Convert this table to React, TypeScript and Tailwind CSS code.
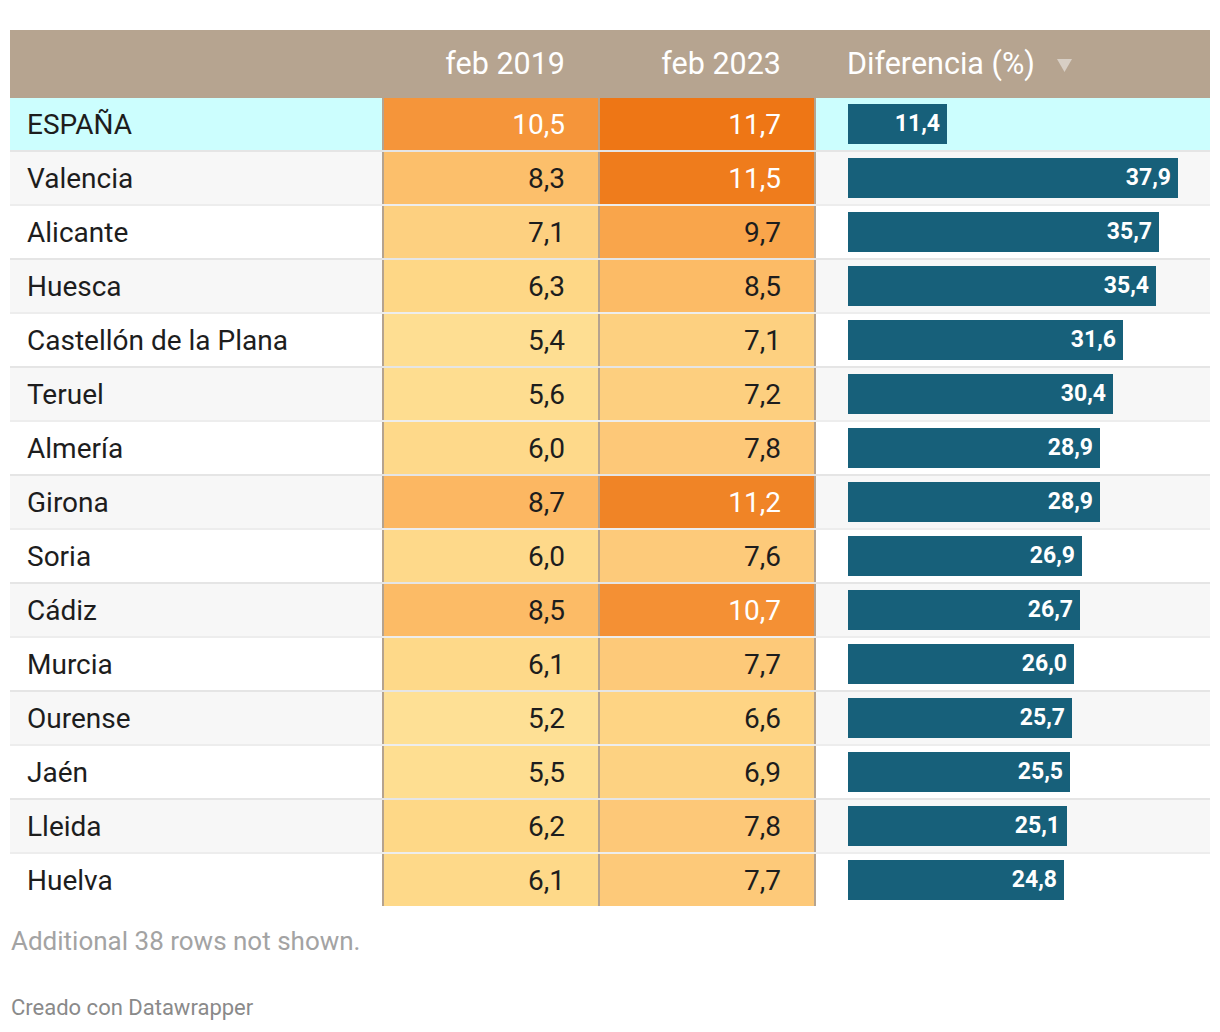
import React from 'react';

type Row = { name: string; a: number; b: number; diff: number };

const rows: Row[] = [
  { name: 'ESPAÑA', a: 10.5, b: 11.7, diff: 11.4 },
  { name: 'Valencia', a: 8.3, b: 11.5, diff: 37.9 },
  { name: 'Alicante', a: 7.1, b: 9.7, diff: 35.7 },
  { name: 'Huesca', a: 6.3, b: 8.5, diff: 35.4 },
  { name: 'Castellón de la Plana', a: 5.4, b: 7.1, diff: 31.6 },
  { name: 'Teruel', a: 5.6, b: 7.2, diff: 30.4 },
  { name: 'Almería', a: 6.0, b: 7.8, diff: 28.9 },
  { name: 'Girona', a: 8.7, b: 11.2, diff: 28.9 },
  { name: 'Soria', a: 6.0, b: 7.6, diff: 26.9 },
  { name: 'Cádiz', a: 8.5, b: 10.7, diff: 26.7 },
  { name: 'Murcia', a: 6.1, b: 7.7, diff: 26.0 },
  { name: 'Ourense', a: 5.2, b: 6.6, diff: 25.7 },
  { name: 'Jaén', a: 5.5, b: 6.9, diff: 25.5 },
  { name: 'Lleida', a: 6.2, b: 7.8, diff: 25.1 },
  { name: 'Huelva', a: 6.1, b: 7.7, diff: 24.8 },
];

// color stops sampled from the heatmap
const stops: [number, number[]][] = [
  [5.2, [254, 224, 149]],
  [6.3, [254, 215, 134]],
  [7.1, [253, 208, 128]],
  [7.8, [253, 200, 120]],
  [8.5, [252, 187, 102]],
  [9.7, [249, 165, 75]],
  [10.5, [245, 149, 58]],
  [11.2, [240, 132, 38]],
  [11.7, [238, 118, 21]],
];

function heat(v: number): string {
  if (v <= stops[0][0]) return `rgb(${stops[0][1].join(',')})`;
  for (let i = 1; i < stops.length; i++) {
    const [v1, c1] = stops[i];
    const [v0, c0] = stops[i - 1];
    if (v <= v1) {
      const t = (v - v0) / (v1 - v0);
      const c = c0.map((x, k) => Math.round(x + (c1[k] - x) * t));
      return `rgb(${c.join(',')})`;
    }
  }
  return `rgb(${stops[stops.length - 1][1].join(',')})`;
}

const fmt = (n: number) => n.toFixed(1).replace('.', ',');

const PX_PER_UNIT = 330 / 37.9;

function HeatCell({ v, last }: { v: number; last?: boolean }) {
  return (
    <div
      className={`shrink-0 border-l-2 border-l-[#b5a38f] flex items-center justify-end pr-[33px] pt-[2px] ${
        last ? 'border-r-2 border-r-[#b5a38f] w-[218px]' : 'w-[216px]'
      } ${v >= 10 ? 'text-white' : 'text-[#1d1d1d]'}`}
      style={{ backgroundColor: heat(v) }}
    >
      {fmt(v)}
    </div>
  );
}

export default function App() {
  return (
    <div className="bg-white w-[1220px] h-[1032px] pt-[30px] px-[10px] font-['Roboto','Liberation_Sans',sans-serif]">
      {/* Header */}
      <div className="flex h-[68px] bg-[#b6a490] text-white text-[30.5px] items-center">
        <div className="w-[372px] shrink-0" />
        <div className="w-[216px] shrink-0 text-right pr-[33px]">feb 2019</div>
        <div className="w-[218px] shrink-0 text-right pr-[35px]">feb 2023</div>
        <div className="flex-1 pl-[31px] flex items-center gap-[22px]">
          <span>Diferencia (%)</span>
          <svg width="15" height="13" viewBox="0 0 15 13" className="mt-[3px]">
            <polygon points="0,0 15,0 7.5,13" fill="#d8cfc5" />
          </svg>
        </div>
      </div>

      {/* Rows */}
      {rows.map((r, i) => {
        const bg = i === 0 ? 'bg-[#ccfefe]' : i % 2 === 1 ? 'bg-[#f7f7f7]' : 'bg-white';
        return (
          <div
            key={r.name}
            className={`flex text-[28px] ${bg} ${i === 0 ? 'h-[52px]' : 'h-[54px] border-t-2 border-black/[0.07]'}`}
          >
            <div className="w-[372px] shrink-0 pl-[17px] pt-[2px] flex items-center text-[#1d1d1d]">{r.name}</div>
            <HeatCell v={r.a} />
            <HeatCell v={r.b} last />
            <div className="flex-1 pl-[32px] flex items-center">
              <div
                className="h-[40px] bg-[#17607a] text-white font-bold text-[23px] flex items-center justify-end pr-[7px] pt-[1px]"
                style={{ width: `${Math.round(r.diff * PX_PER_UNIT)}px` }}
              >
                {fmt(r.diff)}
              </div>
            </div>
          </div>
        );
      })}

      {/* Footer */}
      <div className="pt-[20px] pl-[1px] text-[26px] leading-[30px] text-[#a3a3a3]">Additional 38 rows not shown.</div>
      <div className="pt-[39px] pl-[1px] text-[22px] leading-[26px] text-[#8a8a8a]">Creado con Datawrapper</div>
    </div>
  );
}
